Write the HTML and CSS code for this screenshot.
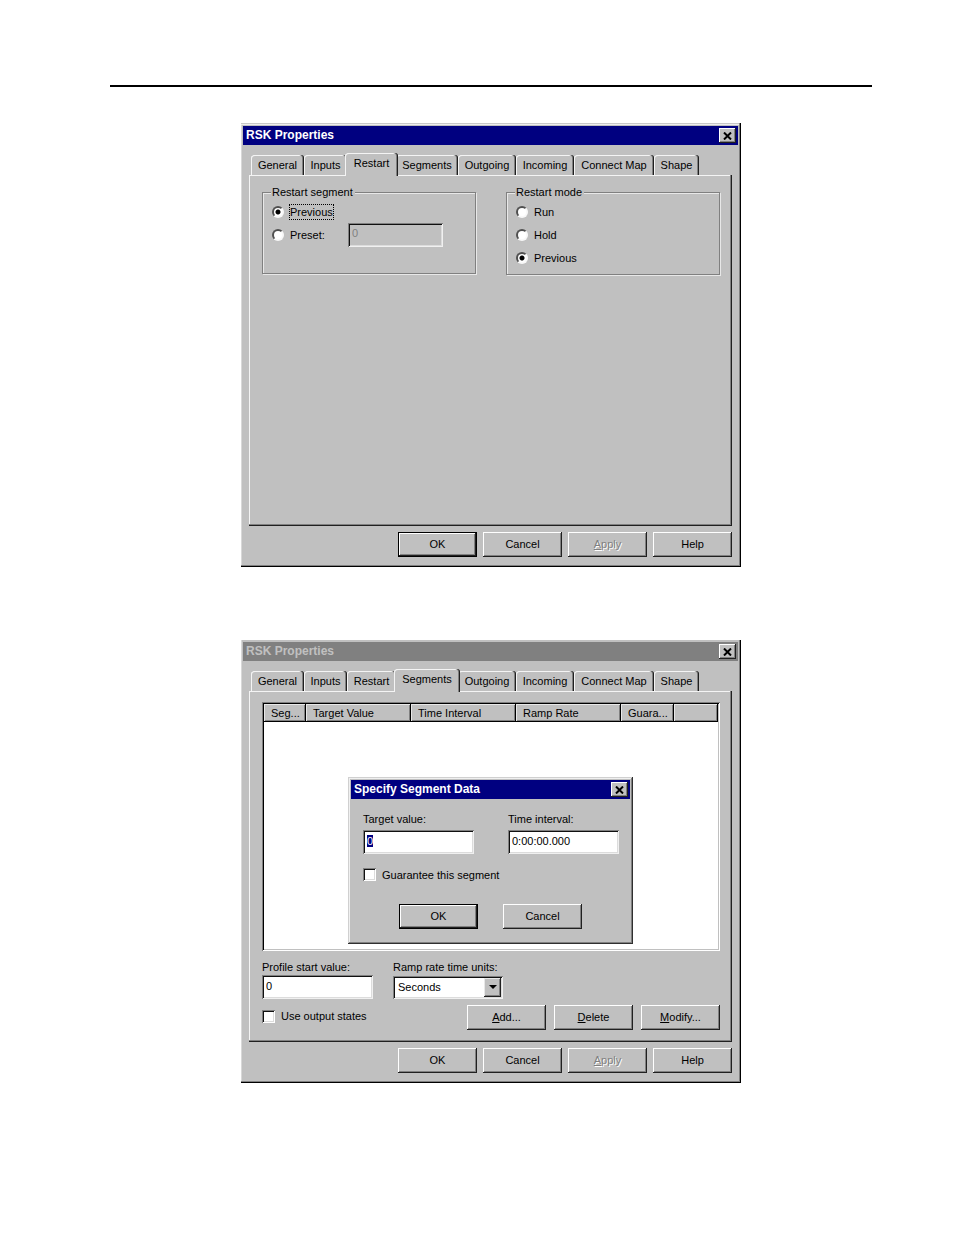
FILE: index.html
```html
<!DOCTYPE html>
<html lang="en">
<head>
<meta charset="utf-8">
<title>RSK Properties</title>
<link rel="stylesheet" href="styles.css">
</head>
<body>
<main class="page">
  <hr class="rule">

  <section class="window framed" aria-label="RSK Properties, Restart">
    <header class="titlebar">
      <h2>RSK Properties</h2>
      <button class="close" type="button" aria-label="Close"><svg viewBox="0 0 9 8" width="9" height="8"><path d="M1 0.5 8 7.5M8 0.5 1 7.5"/></svg></button>
    </header>
    <div class="content">
      <div class="tabs" role="tablist">
        <button class="tab" type="button" role="tab">General</button>
        <button class="tab" type="button" role="tab">Inputs</button>
        <button class="tab active" type="button" role="tab" aria-selected="true">Restart</button>
        <button class="tab" type="button" role="tab">Segments</button>
        <button class="tab" type="button" role="tab">Outgoing</button>
        <button class="tab" type="button" role="tab">Incoming</button>
        <button class="tab" type="button" role="tab">Connect Map</button>
        <button class="tab" type="button" role="tab">Shape</button>
      </div>
      <div class="panel restart" role="tabpanel">
        <fieldset class="group">
          <legend>Restart segment</legend>
          <div class="option"><input type="radio" name="segment" id="seg-prev" checked><label class="focused" for="seg-prev">Previous</label></div>
          <div class="option"><input type="radio" name="segment" id="seg-preset"><label class="preset-label" for="seg-preset">Preset:</label><input class="text preset" type="text" value="0" aria-label="Preset segment" disabled></div>
        </fieldset>
        <fieldset class="group">
          <legend>Restart mode</legend>
          <div class="option"><input type="radio" name="mode" id="mode-run"><label for="mode-run">Run</label></div>
          <div class="option"><input type="radio" name="mode" id="mode-hold"><label for="mode-hold">Hold</label></div>
          <div class="option"><input type="radio" name="mode" id="mode-prev" checked><label for="mode-prev">Previous</label></div>
        </fieldset>
      </div>
      <div class="actions">
        <button class="btn default" type="button">OK</button>
        <button class="btn" type="button">Cancel</button>
        <button class="btn" type="button" disabled><u>A</u>pply</button>
        <button class="btn" type="button">Help</button>
      </div>
    </div>
  </section>

  <section class="window inactive" aria-label="RSK Properties, Segments">
    <header class="titlebar">
      <h2>RSK Properties</h2>
      <button class="close" type="button" aria-label="Close"><svg viewBox="0 0 9 8" width="9" height="8"><path d="M1 0.5 8 7.5M8 0.5 1 7.5"/></svg></button>
    </header>
    <div class="content">
      <div class="tabs" role="tablist">
        <button class="tab" type="button" role="tab">General</button>
        <button class="tab" type="button" role="tab">Inputs</button>
        <button class="tab" type="button" role="tab">Restart</button>
        <button class="tab active" type="button" role="tab" aria-selected="true">Segments</button>
        <button class="tab" type="button" role="tab">Outgoing</button>
        <button class="tab" type="button" role="tab">Incoming</button>
        <button class="tab" type="button" role="tab">Connect Map</button>
        <button class="tab" type="button" role="tab">Shape</button>
      </div>
      <div class="panel segments" role="tabpanel">
        <div class="list">
          <table>
            <colgroup><col class="c-seg"><col class="c-wide"><col class="c-wide"><col class="c-wide"><col class="c-guar"><col></colgroup>
            <thead><tr><th>Seg...</th><th>Target Value</th><th>Time Interval</th><th>Ramp Rate</th><th>Guara...</th><th></th></tr></thead>
          </table>
        </div>
        <div class="fields">
          <div class="field"><label for="start">Profile start value:</label><input class="text" id="start" type="text" value="0"></div>
          <div class="field"><label for="units">Ramp rate time units:</label>
            <div class="combo">
              <select id="units"><option>Seconds</option></select>
              <span class="arrow"><svg viewBox="0 0 8 4" width="8" height="4"><path d="M0 0H8L4 4Z"/></svg></span>
            </div>
          </div>
        </div>
        <div class="row">
          <div class="check"><input type="checkbox" id="states"><label for="states">Use output states</label></div>
          <div class="edit">
            <button class="btn" type="button"><u>A</u>dd...</button>
            <button class="btn" type="button"><u>D</u>elete</button>
            <button class="btn" type="button"><u>M</u>odify...</button>
          </div>
        </div>
      </div>
      <div class="actions">
        <button class="btn" type="button">OK</button>
        <button class="btn" type="button">Cancel</button>
        <button class="btn" type="button" disabled><u>A</u>pply</button>
        <button class="btn" type="button">Help</button>
      </div>
    </div>

    <div class="dialog" role="dialog" aria-label="Specify Segment Data">
      <header class="titlebar">
        <h2>Specify Segment Data</h2>
        <button class="close" type="button" aria-label="Close"><svg viewBox="0 0 9 8" width="9" height="8"><path d="M1 0.5 8 7.5M8 0.5 1 7.5"/></svg></button>
      </header>
      <div class="dialog-body">
        <div class="dialog-fields">
          <div class="field"><label for="target">Target value:</label><input class="text" id="target" type="text" value="0"></div>
          <div class="field"><label for="interval">Time interval:</label><input class="text" id="interval" type="text" value="0:00:00.000"></div>
        </div>
        <div class="check"><input type="checkbox" id="guarantee"><label for="guarantee">Guarantee this segment</label></div>
        <div class="dialog-actions">
          <button class="btn default" type="button">OK</button>
          <button class="btn" type="button">Cancel</button>
        </div>
      </div>
    </div>
  </section>
</main>
<script src="script.js"></script>
</body>
</html>
```
FILE: script.js
```js
const target = document.getElementById('target');
target.focus({ preventScroll: true });
target.select();
```
FILE: styles.css
```css
:root {
  --face: #c0c0c0;
  --light: #f4f4f4;
  --shade: #808080;
  --dark: #202020;
  --navy: #000080;
}

* { box-sizing: border-box; }

body {
  margin: 0;
  background: #fff;
  color: #000;
  font: 11px/14px "Liberation Sans", Arial, sans-serif;
}

button, input, select {
  font: inherit;
  color: inherit;
  margin: 0;
  border: 0;
  border-radius: 0;
  outline: 0;
}

.page { padding: 85px 82px 64px 110px; }

.rule {
  height: 2px;
  margin: 0 0 36px;
  border: 0;
  background: #000;
}

.window {
  position: relative;
  max-width: 500px;
  margin: 0 auto 73px;
  padding: 2px 3px 10px 2px;
  background: var(--face);
  box-shadow: inset -1px -1px #000, inset -2px -2px var(--shade), inset 1px 0 #d8d8d8;
}

.window.framed {
  padding-top: 3px;
  box-shadow: inset -1px -1px #000, inset -2px -2px var(--shade), inset 0 1px #c8c8c8, inset 0 2px #eee, inset 1px 0 #d8d8d8;
}

.titlebar {
  display: flex;
  align-items: center;
  justify-content: space-between;
  height: 19px;
  padding: 0 2px 0 3px;
  background: var(--navy);
  color: #fff;
}

.titlebar h2 {
  margin: 0;
  font-size: 12px;
  line-height: 19px;
}

.inactive > .titlebar {
  background: var(--shade);
  color: var(--face);
}

.close {
  display: flex;
  align-items: center;
  justify-content: center;
  width: 17px;
  height: 15px;
  padding: 0;
  background: var(--face);
  box-shadow: inset -1px -1px var(--dark), inset 1px 1px #fff, inset -2px -2px var(--shade);
}

.close path {
  fill: none;
  stroke: #000;
  stroke-width: 2;
}

.content { padding: 8px 6px 0; }

.tabs {
  display: grid;
  grid-template-columns: 53px 43px 49px 62px 58px 58px 80px 45px;
  align-items: end;
  height: 22px;
  padding-left: 2px;
}

.tab {
  height: 20px;
  padding: 0;
  background: var(--face);
  border-radius: 3px 3px 0 0;
  box-shadow: inset -1px 0 var(--dark), inset -2px 0 var(--shade), inset 1px 1px var(--light);
  white-space: nowrap;
}

.tab.active {
  position: relative;
  z-index: 1;
  height: 23px;
  margin: 0 -2px -1px;
  padding-bottom: 3px;
}

.panel {
  background: var(--face);
  box-shadow: inset -1px -1px var(--dark), inset -2px -2px var(--shade), inset 1px 1px var(--light);
}

.restart {
  display: grid;
  grid-template-columns: 1fr 1fr;
  align-items: start;
  gap: 30px;
  min-height: 351px;
  padding: 10px 12px 12px 13px;
}

.group {
  min-width: 0;
  min-height: 89px;
  margin: 0;
  padding: 1px 9px 5px;
  border: 1px solid var(--shade);
  box-shadow: inset 1px 1px #e8e8e8, 1px 1px #e8e8e8;
}

.group legend {
  padding: 0 2px 0 1px;
  margin-left: -1px;
  background: var(--face);
}

.option {
  display: flex;
  align-items: center;
  height: 23px;
}

input[type="radio"] {
  appearance: none;
  width: 12px;
  height: 12px;
  margin-right: 6px;
  border: 2px solid;
  border-color: #505050 #f8f8f8 #f8f8f8 #505050;
  border-radius: 50%;
  background: #fff;
}

input[type="radio"]:checked { background: radial-gradient(circle, #000 2px, #fff 3px); }

.focused { outline: 1px dotted #000; }

.preset-label { width: 58px; }

.text {
  display: block;
  width: 111px;
  height: 24px;
  padding: 0 4px 3px;
  background: #fff;
  box-shadow: inset 1px 1px var(--shade), inset -1px -1px #f0f0f0, inset 2px 2px #101010, inset -2px -2px #dcdcdc;
}

.text::selection {
  background: var(--navy);
  color: #fff;
}

.text.preset {
  width: 95px;
  background: var(--face);
  color: var(--shade);
}

.actions {
  display: flex;
  justify-content: flex-end;
  gap: 6px;
  padding-top: 6px;
}

.btn {
  width: 79px;
  height: 25px;
  padding: 0 0 2px;
  background: var(--face);
  box-shadow: inset -1px -1px var(--dark), inset 1px 1px #fff, inset -2px -2px var(--shade);
}

.btn.default { box-shadow: inset 0 0 0 1px #000, inset -2px -2px var(--dark), inset 2px 2px #fff, inset -3px -3px var(--shade); }

.btn:disabled {
  color: var(--shade);
  text-shadow: 1px 1px #fff;
}

.segments { padding: 11px 12px 12px 13px; }

.list {
  height: 249px;
  padding: 2px;
  background: #fff;
  box-shadow: inset 1px 1px var(--shade), inset -1px -1px #fff, inset 2px 2px #000, inset -2px -2px var(--face);
}

.list table {
  width: 100%;
  table-layout: fixed;
  border-collapse: separate;
  border-spacing: 0;
}

.c-seg { width: 42px; }
.c-wide { width: 105px; }
.c-guar { width: 53px; }

.list th {
  height: 18px;
  padding: 0 0 0 7px;
  background: var(--face);
  box-shadow: inset -1px -1px #000, inset 1px 1px #e8e8e8, inset -2px -2px var(--shade);
  font-weight: normal;
  text-align: left;
}

.fields {
  display: flex;
  gap: 20px;
  padding: 8px 0 6px;
}

.field { display: grid; }

.fields label { line-height: 16px; }

.combo {
  position: relative;
  width: 110px;
}

.combo select {
  display: block;
  width: 100%;
  height: 23px;
  padding: 0 20px 0 5px;
  appearance: none;
  background: #fff;
  box-shadow: inset 1px 1px var(--shade), inset -1px -1px #f0f0f0, inset 2px 2px #101010, inset -2px -2px #dcdcdc;
}

.arrow {
  position: absolute;
  top: 2px;
  right: 2px;
  bottom: 2px;
  display: flex;
  align-items: center;
  justify-content: center;
  width: 17px;
  background: var(--face);
  box-shadow: inset -1px -1px var(--dark), inset 1px 1px #e8e8e8, inset -2px -2px var(--shade);
  pointer-events: none;
}

.row {
  display: flex;
  justify-content: space-between;
}

.edit {
  display: flex;
  gap: 8px;
}

.check {
  display: flex;
  align-items: center;
  gap: 6px;
}

.row .check { height: 22px; }

input[type="checkbox"] {
  appearance: none;
  width: 13px;
  height: 13px;
  background: #fff;
  box-shadow: inset 1px 1px var(--shade), inset -1px -1px #fff, inset 2px 2px #101010, inset -2px -2px #dcdcdc;
}

.dialog {
  position: absolute;
  top: 137px;
  left: 107px;
  z-index: 2;
  width: 285px;
  padding: 3px;
  background: var(--face);
  box-shadow: inset -1px -1px #303030, inset 1px 1px #d0d0d0, inset -2px -2px var(--shade), inset 2px 2px #f0f0f0;
}

.dialog-body { padding: 13px 12px 12px; }

.dialog-fields {
  display: flex;
  gap: 34px;
  margin-bottom: 14px;
}

.dialog-fields .field { gap: 4px; }

.dialog .check { height: 13px; }

.dialog-actions {
  display: flex;
  justify-content: center;
  gap: 25px;
  padding-top: 23px;
}
```
